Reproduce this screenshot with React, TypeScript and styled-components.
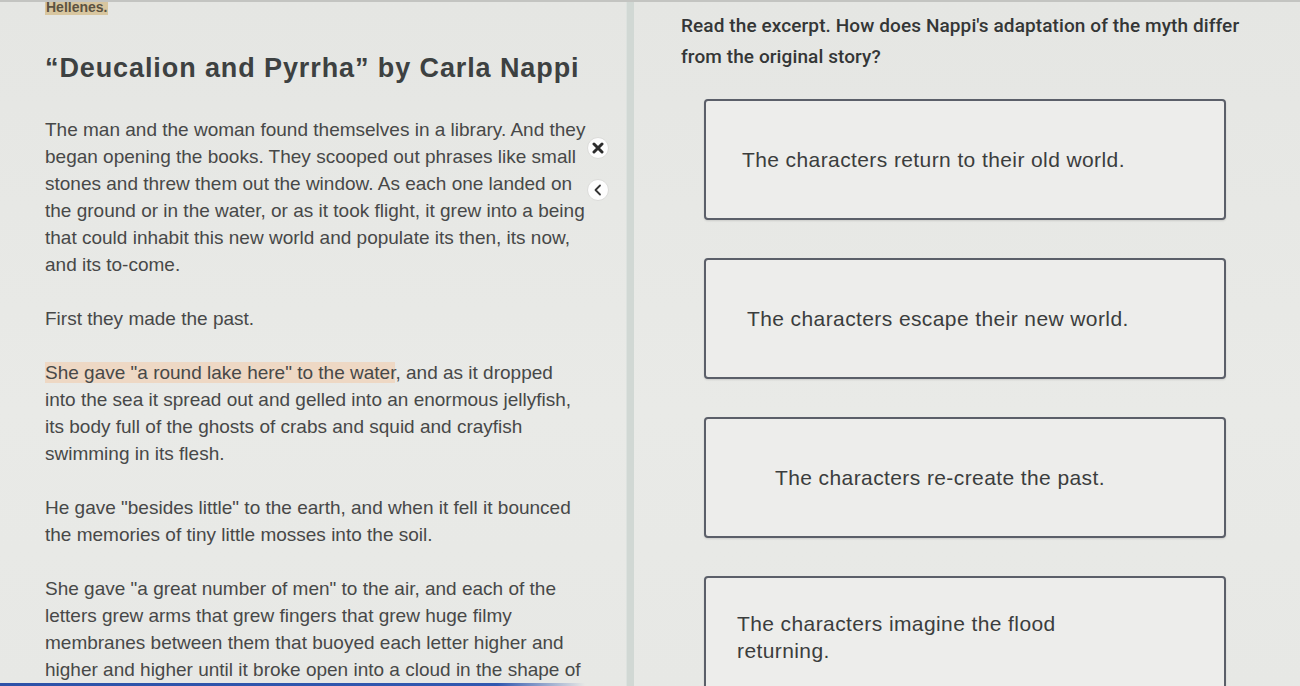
import React from 'react';
import styled, { createGlobalStyle } from 'styled-components';

const Global = createGlobalStyle`
  html, body { margin: 0; padding: 0; background: #e7e8e5; }
  body { font-family: "Liberation Sans", Arial, sans-serif; }
`;

const Page = styled.div`
  width: 1300px;
  height: 686px;
  overflow: hidden;
  display: flex;
  position: relative;
  box-sizing: border-box;
  border-top: 2px solid #c3c4c1;
  background: linear-gradient(180deg, #e5e6e3 0%, #e9eae7 60%, #e7e8e5 100%);
`;

const Passage = styled.section`
  width: 626px;
  flex: none;
  box-sizing: border-box;
  padding: 0 30px 0 45px;
  position: relative;
  color: #474848;
`;

const Source = styled.div`
  margin-top: -3px;
  font-size: 14px;
  font-weight: bold;
  line-height: 16px;
`;

const SourceMark = styled.span`
  background: #d8c69f;
  color: #5b5242;
  padding: 0 1px;
`;

const Title = styled.h1`
  margin: 37px 0 0;
  font-size: 27px;
  line-height: 32px;
  font-weight: bold;
  color: #3d4141;
  letter-spacing: 0.9px;
`;

const Para = styled.p<{ $first?: boolean }>`
  margin: ${(p) => (p.$first ? '32px' : '27px')} 0 0;
  font-size: 19px;
  line-height: 27px;
  white-space: nowrap;
`;

const Mark = styled.span`
  background: #eed8c4;
`;

const FloatButton = styled.button<{ $top: number }>`
  position: absolute;
  left: 587px;
  top: ${(p) => p.$top}px;
  width: 22px;
  height: 22px;
  border-radius: 50%;
  border: 1px solid #dcdcda;
  background: rgba(255, 255, 255, 0.9);
  padding: 0;
  display: flex;
  align-items: center;
  justify-content: center;
  color: #333;
`;

const BottomBar = styled.div`
  position: absolute;
  left: 0;
  bottom: 0;
  width: 585px;
  height: 3px;
  background: linear-gradient(90deg, #2d52a8 0%, #3158b0 85%, rgba(49, 88, 176, 0) 100%);
`;

const Divider = styled.div`
  width: 7px;
  flex: none;
  background: #d1d8d4;
  border-left: 1px solid #dde2df;
`;

const QuestionPanel = styled.section`
  flex: 1;
  padding-left: 47px;
  box-sizing: border-box;
`;

const Question = styled.div`
  margin-top: 8px;
  font-family: Roboto, "Liberation Sans", Arial, sans-serif;
  font-weight: 500;
  font-size: 19px;
  line-height: 31px;
  color: #343636;
  width: 600px;
  letter-spacing: 0.1px;
`;

const Options = styled.div`
  margin: 27px 0 0 23px;
  display: flex;
  flex-direction: column;
  gap: 38px;
`;

const Option = styled.div<{ $pad: number }>`
  width: 522px;
  height: 121px;
  box-sizing: border-box;
  border: 2px solid #5b5f69;
  border-radius: 4px;
  background: #ededeb;
  box-shadow: 0 1px 2px rgba(0, 0, 0, 0.12);
  display: flex;
  align-items: center;
  padding-left: ${(p) => p.$pad}px;
  font-size: 21px;
  line-height: 27px;
  letter-spacing: 0.4px;
  color: #3b3d3d;
`;

const OptionText = styled.span<{ $max?: number }>`
  max-width: ${(p) => (p.$max ? `${p.$max}px` : 'none')};
`;

const CloseIcon = () => (
  <svg width="12" height="12" viewBox="0 0 12 12">
    <path d="M2 2 L10 10 M10 2 L2 10" stroke="#2c2c2c" strokeWidth="3" strokeLinecap="round" />
  </svg>
);

const ChevronIcon = () => (
  <svg width="10" height="12" viewBox="0 0 10 12">
    <path d="M7 1.5 L2.5 6 L7 10.5" stroke="#333" strokeWidth="1.8" fill="none" strokeLinecap="round" strokeLinejoin="round" />
  </svg>
);

export default function App() {
  return (
    <>
      <Global />
      <Page>
        <Passage>
          <Source>
            <SourceMark>Hellenes.</SourceMark>
          </Source>
          <Title>“Deucalion and Pyrrha” by Carla Nappi</Title>
          <Para $first>
            The man and the woman found themselves in a library. And they
            <br />
            began opening the books. They scooped out phrases like small
            <br />
            stones and threw them out the window. As each one landed on
            <br />
            the ground or in the water, or as it took flight, it grew into a being
            <br />
            that could inhabit this new world and populate its then, its now,
            <br />
            and its to-come.
          </Para>
          <Para>First they made the past.</Para>
          <Para>
            <Mark>She gave "a round lake here" to the water</Mark>, and as it dropped
            <br />
            into the sea it spread out and gelled into an enormous jellyfish,
            <br />
            its body full of the ghosts of crabs and squid and crayfish
            <br />
            swimming in its flesh.
          </Para>
          <Para>
            He gave "besides little" to the earth, and when it fell it bounced
            <br />
            the memories of tiny little mosses into the soil.
          </Para>
          <Para>
            She gave "a great number of men" to the air, and each of the
            <br />
            letters grew arms that grew fingers that grew huge filmy
            <br />
            membranes between them that buoyed each letter higher and
            <br />
            higher and higher until it broke open into a cloud in the shape of
          </Para>
          <FloatButton $top={135} aria-label="Close">
            <CloseIcon />
          </FloatButton>
          <FloatButton $top={177} aria-label="Collapse">
            <ChevronIcon />
          </FloatButton>
          <BottomBar />
        </Passage>
        <Divider />
        <QuestionPanel>
          <Question>
            Read the excerpt. How does Nappi's adaptation of the myth differ
            <br />
            from the original story?
          </Question>
          <Options>
            <Option $pad={36}>
              <OptionText>The characters return to their old world.</OptionText>
            </Option>
            <Option $pad={41}>
              <OptionText>The characters escape their new world.</OptionText>
            </Option>
            <Option $pad={69}>
              <OptionText>The characters re-create the past.</OptionText>
            </Option>
            <Option $pad={31}>
              <OptionText $max={345}>The characters imagine the flood returning.</OptionText>
            </Option>
          </Options>
        </QuestionPanel>
      </Page>
    </>
  );
}
